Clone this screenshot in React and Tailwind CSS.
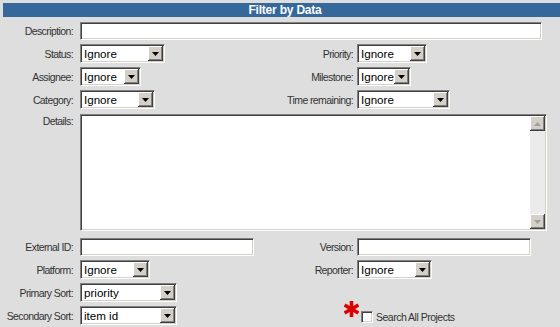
const inset =
  "bg-white border border-t-[#808080] border-l-[#808080] border-r-white border-b-white shadow-[inset_1px_1px_0_#404040,inset_-1px_-1px_0_#d4d0c8]";
const raised =
  "bg-[#d4d0c8] shadow-[inset_-1px_-1px_0_#404040,inset_1px_1px_0_#ffffff,inset_-2px_-2px_0_#808080]";

const Label = ({ children, className = "" }) => (
  <div className={`w-[73px] shrink-0 text-right text-[10.5px] tracking-[-0.6px] text-[#333] leading-[12px] whitespace-nowrap ${className}`}>
    {children}
  </div>
);

const Select = ({ value, width }) => (
  <div className={`${width} h-[19px] p-px flex items-center ${inset}`}>
    <span className="flex-1 min-w-0 pl-[2px] text-[11.6px] leading-none text-black whitespace-nowrap">
      {value}
    </span>
    <span className={`w-[15px] h-[15px] shrink-0 flex items-center justify-center ${raised}`}>
      <svg width="7" height="4" viewBox="0 0 7 4">
        <path d="M0 0h7L3.5 4z" fill="#000" />
      </svg>
    </span>
  </div>
);

const Input = ({ width }) => <div className={`${width} h-[18px] ${inset}`} />;

const Row = ({ children, className = "" }) => (
  <div className={`h-[23px] flex items-center ${className}`}>{children}</div>
);

const Half = ({ label, children, gap = "ml-[7px]" }) => (
  <div className="w-[280px] flex items-center">
    <Label>{label}</Label>
    <div className={gap}>{children}</div>
  </div>
);

const ScrollBtn = ({ up }) => (
  <div className={`w-[15px] h-[15px] flex items-center justify-center ${raised}`}>
    <svg width="7" height="4" viewBox="0 0 7 4">
      <path d={up ? "M0 4h7L3.5 0z" : "M0 0h7L3.5 4z"} fill="#a0a0a0" />
    </svg>
  </div>
);

export default function App() {
  return (
    <div className="w-[560px] h-[327px] overflow-hidden bg-[#dedede] font-['Liberation_Sans',Arial,sans-serif]">
      <div className="mt-[3px] ml-[3px] h-[14px] pl-[7px] bg-[#35689b] flex items-center justify-center text-white text-[12px] tracking-[-0.2px] font-bold leading-none">
        Filter by Data
      </div>

      <Row className="mt-[2px]">
        <Label>Description:</Label>
        <div className="ml-[7px]">
          <Input width="w-[462px]" />
        </div>
      </Row>

      <Row>
        <Half label="Status:">
          <Select value="Ignore" width="w-[85px]" />
        </Half>
        <Half label="Priority:" gap="ml-[4px]">
          <Select value="Ignore" width="w-[70px]" />
        </Half>
      </Row>

      <Row>
        <Half label="Assignee:">
          <Select value="Ignore" width="w-[61px]" />
        </Half>
        <Half label="Milestone:" gap="ml-[4px]">
          <Select value="Ignore" width="w-[54px]" />
        </Half>
      </Row>

      <Row>
        <Half label="Category:">
          <Select value="Ignore" width="w-[75px]" />
        </Half>
        <Half label="Time remaining:" gap="ml-[4px]">
          <Select value="Ignore" width="w-[93px]" />
        </Half>
      </Row>

      <div className="mt-[3px] flex items-start">
        <Label className="pt-[1px]">Details:</Label>
        <div className={`ml-[7px] w-[467px] h-[117px] p-px flex ${inset}`}>
          <div className="flex-1" />
          <div className="w-[15px] flex flex-col justify-between bg-[#ebebeb]">
            <ScrollBtn up />
            <ScrollBtn />
          </div>
        </div>
      </div>

      <Row className="mt-[4px]">
        <Half label="External ID:">
          <Input width="w-[174px]" />
        </Half>
        <Half label="Version:" gap="ml-[4px]">
          <Input width="w-[174px]" />
        </Half>
      </Row>

      <Row>
        <Half label="Platform:">
          <Select value="Ignore" width="w-[70px]" />
        </Half>
        <Half label="Reporter:" gap="ml-[4px]">
          <Select value="Ignore" width="w-[75px]" />
        </Half>
      </Row>

      <Row>
        <Half label="Primary Sort:">
          <Select value="priority" width="w-[97px]" />
        </Half>
      </Row>

      <Row>
        <Half label="Secondary Sort:">
          <Select value="item id" width="w-[97px]" />
        </Half>
        <div className="pl-[64px] flex items-center">
          <svg width="15" height="16" viewBox="0 0 15 16" className="mb-[14px]">
            <g fill="#e00000" transform="translate(7.5 8)">
              <rect x="-1.8" y="-8" width="3.6" height="16" />
              <rect x="-1.8" y="-8" width="3.6" height="16" transform="rotate(60)" />
              <rect x="-1.8" y="-8" width="3.6" height="16" transform="rotate(120)" />
            </g>
          </svg>
          <div className={`ml-[2px] mt-[3px] w-[12px] h-[12px] ${inset}`} />
          <span className="ml-[3px] mt-[3px] text-[10.5px] tracking-[-0.5px] text-[#333] leading-none">
            Search All Projects
          </span>
        </div>
      </Row>
    </div>
  );
}
